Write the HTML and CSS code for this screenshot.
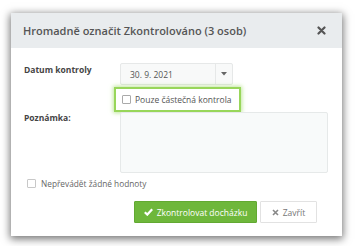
FILE: index.html
```html
<!DOCTYPE html>
<html lang="cs">
<head>
<meta charset="utf-8">
<link rel="stylesheet" href="styles.css">
</head>
<body>
<div class="modal">
  <div class="header">
    <h1 class="title">Hromadně označit Zkontrolováno (3 osob)</h1>
    <svg class="close" width="9" height="9" viewBox="0 0 9 9"><path d="M1.5 1.5L7.5 7.5M7.5 1.5L1.5 7.5" stroke="#555" stroke-width="2.2" stroke-linecap="round"/></svg>
  </div>
  <div class="body">
    <div class="label">Datum kontroly</div>
    <div class="date">
      <span class="date-value">30. 9. 2021</span>
      <span class="date-btn"><svg width="6" height="4" viewBox="0 0 6 4"><path d="M0 0H6L3 3.5Z" fill="#666"/></svg></span>
    </div>
    <div class="spacer"></div>
    <div class="highlight"><span class="cb"></span><span>Pouze částečná kontrola</span></div>
    <div class="label label-note">Poznámka:</div>
    <div class="textarea"></div>
    <div class="check-row"><span class="cb cb-light"></span><span>Nepřevádět žádné hodnoty</span></div>
    <div class="footer">
      <button class="btn btn-primary"><svg width="9" height="8" viewBox="0 0 9 8"><path d="M0.8 4.2L3.3 6.6L8.2 1.2" stroke="#fff" stroke-width="2.2" fill="none"/></svg>Zkontrolovat docházku</button>
      <button class="btn btn-secondary"><svg width="7" height="7" viewBox="0 0 7 7"><path d="M1 1L6 6M6 1L1 6" stroke="#888" stroke-width="1.6"/></svg>Zavřít</button>
    </div>
  </div>
</div>
</body>
</html>
```
FILE: styles.css
```css
html, body {
  margin: 0;
  padding: 0;
  background: #fff;
}
body {
  font-family: "Open Sans", "Liberation Sans", sans-serif;
  width: 356px;
  height: 246px;
  overflow: hidden;
}
.modal {
  margin: 13px 0 0 11px;
  width: 331px;
  height: 223px;
  background: #fff;
  box-shadow: 0 2px 8px 1px rgba(0,0,0,0.55);
  display: flex;
  flex-direction: column;
}
.header {
  height: 35px;
  background: #e9ecee;
  display: flex;
  align-items: center;
  justify-content: space-between;
  padding: 0 16px 0 12px;
  flex-shrink: 0;
}
.title {
  margin: 0;
  font-size: 11px;
  font-weight: 600;
  color: #555;
}
.close {
  display: block;
}
.body {
  display: grid;
  grid-template-columns: 96px 208px;
  padding: 15px 0 0 13px;
}
.label {
  font-size: 8.5px;
  font-weight: 700;
  color: #444;
  padding-top: 1px;
  line-height: 12px;
}
.date {
  width: 113px;
  height: 22px;
  box-sizing: border-box;
  border: 1px solid #e6e8e8;
  border-radius: 2px;
  background: #f8f9f9;
  display: flex;
  align-items: center;
  font-size: 8.5px;
  color: #555;
}
.date-value {
  flex: 1;
  padding-left: 9px;
}
.date-btn {
  width: 16px;
  height: 100%;
  border-left: 1px solid #e6e8e8;
  display: flex;
  align-items: center;
  justify-content: center;
}
.highlight {
  margin: 2px 0 0 -6px;
  width: 127px;
  height: 25px;
  box-sizing: border-box;
  border: 2px solid #98d65a;
  box-shadow: 0 0 4px 1px rgba(150,214,90,0.6);
  display: flex;
  align-items: center;
  gap: 4px;
  padding-left: 6px;
  font-size: 8.5px;
  color: #555;
  white-space: nowrap;
}
.cb {
  width: 9px;
  height: 9px;
  box-sizing: border-box;
  border: 1px solid #aaa;
  border-radius: 1px;
  background: #fff;
  flex-shrink: 0;
}
.cb-light {
  border-color: #c8c8c8;
}
.label-note {
  padding-top: 0;
}
.textarea {
  height: 61px;
  box-sizing: border-box;
  border: 1px solid #e6e9e9;
  border-radius: 2px;
  background: #f8fafa;
}
.check-row {
  grid-column: 1 / 3;
  display: flex;
  align-items: center;
  gap: 5px;
  margin: 4px 0 0 3px;
  height: 12px;
  font-size: 8.3px;
  color: #666;
}
.footer {
  grid-column: 1 / 3;
  display: flex;
  justify-content: flex-end;
  gap: 3px;
  margin: 12px 11px 0 0;
}
.btn {
  height: 22px;
  box-sizing: border-box;
  font-family: inherit;
  font-size: 8.5px;
  display: flex;
  align-items: center;
  justify-content: center;
  gap: 4px;
  padding: 0;
  border-radius: 1px;
}
.btn-primary {
  width: 123px;
  background: #6eb73b;
  border: 1px solid #62a932;
  color: #fff;
}
.btn-secondary {
  width: 57px;
  background: #fff;
  border: 1px solid #e2e2e2;
  color: #777;
}
```
